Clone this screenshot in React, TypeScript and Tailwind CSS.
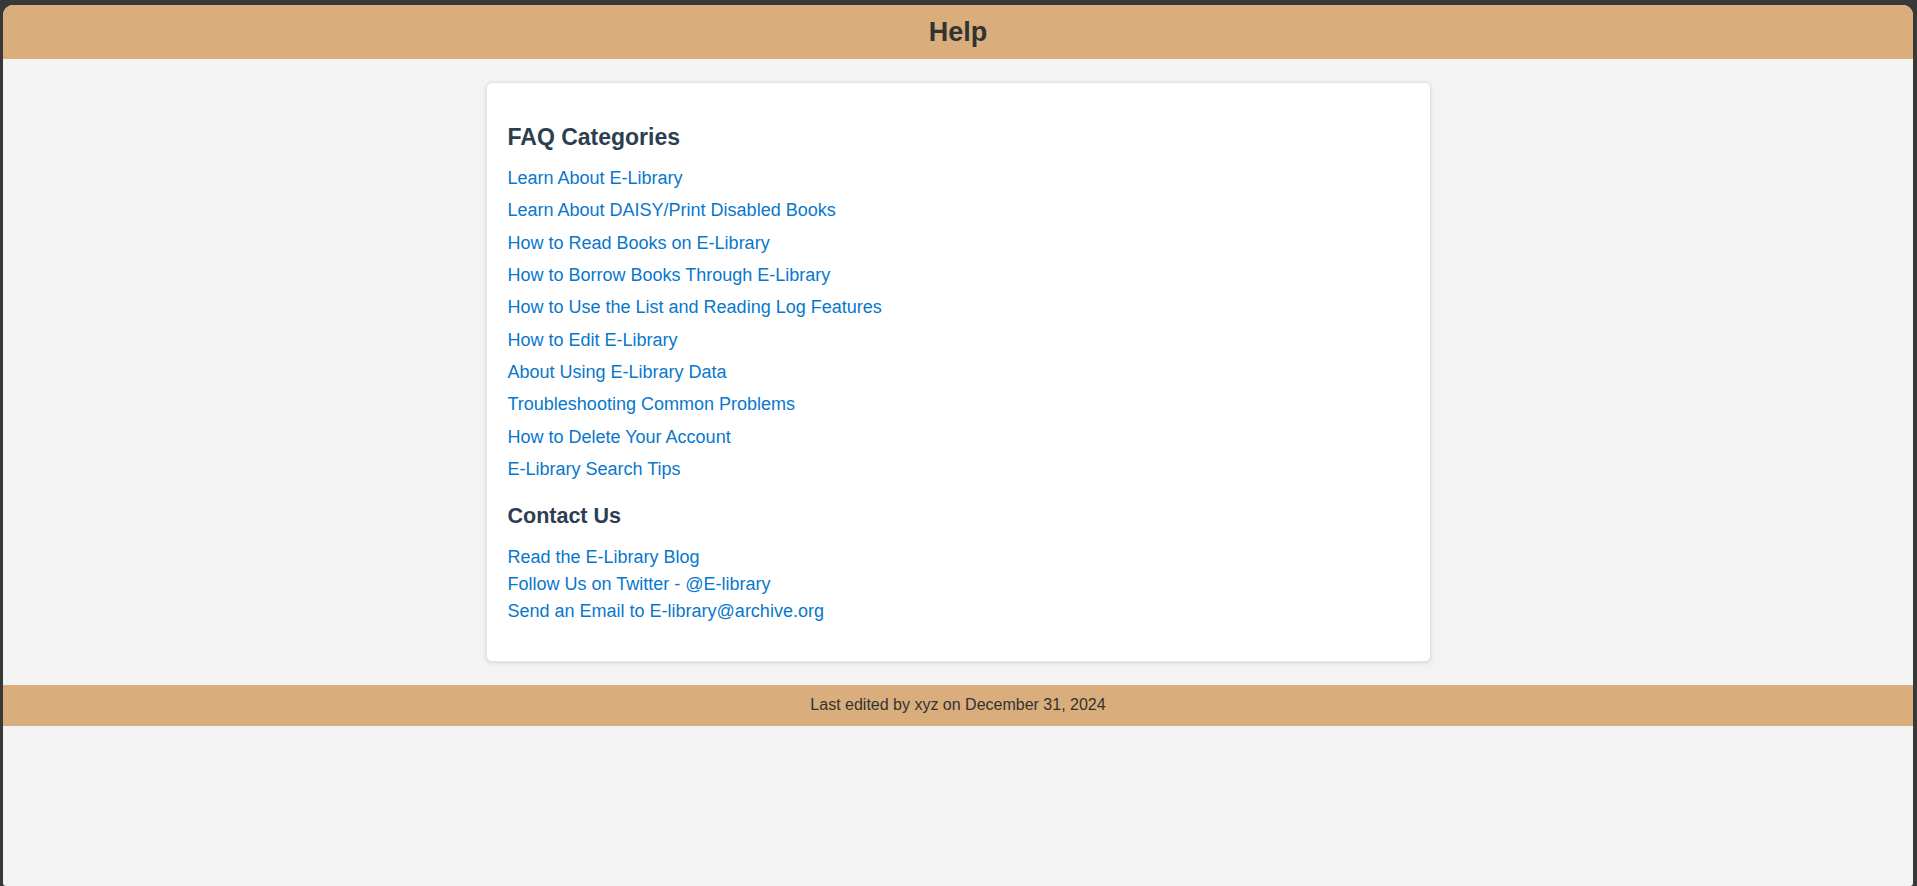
const faqLinks = [
  'Learn About E-Library',
  'Learn About DAISY/Print Disabled Books',
  'How to Read Books on E-Library',
  'How to Borrow Books Through E-Library',
  'How to Use the List and Reading Log Features',
  'How to Edit E-Library',
  'About Using E-Library Data',
  'Troubleshooting Common Problems',
  'How to Delete Your Account',
  'E-Library Search Tips',
]

const contactLinks = [
  'Read the E-Library Blog',
  'Follow Us on Twitter - @E-library',
  'Send an Email to E-library@archive.org',
]

export default function App() {
  return (
    <div className="h-[886px] bg-[#383838] pt-[5px] pl-[3px] pr-[4px] font-['Liberation_Sans',Arial,sans-serif]">
      <div className="flex h-full flex-col overflow-hidden rounded-t-[10px] rounded-b-[3px] bg-[#f3f3f3]">
        {/* top bar */}
        <header className="flex h-[54px] shrink-0 items-center justify-center bg-[#d9ad7c]">
          <h1 className="text-[27px] font-bold leading-none text-[#333333]">Help</h1>
        </header>

        <main className="flex justify-center pt-[23px]">
          <div className="w-[945px] rounded-[6px] border border-[#e3e3e3] bg-white pl-[21px] pr-5 pt-[40px] pb-[36px] shadow-[0_1px_4px_rgba(0,0,0,0.12)]">
            <h2 className="text-[23px] font-bold leading-[28px] text-[#2c3e50]">FAQ Categories</h2>
            <ul className="mt-[14px] flex flex-col gap-[5.33px]">
              {faqLinks.map((l) => (
                <li key={l}>
                  <a href="#" className="text-[18px] leading-[27px] text-[#0877cc]">
                    {l}
                  </a>
                </li>
              ))}
            </ul>

            <h2 className="mt-[20px] text-[21.5px] font-bold leading-[26px] text-[#2c3e50]">Contact Us</h2>
            <ul className="mt-[15px] flex flex-col">
              {contactLinks.map((l) => (
                <li key={l} className="leading-[27px]">
                  <a href="#" className="text-[18px] leading-[27px] text-[#0877cc]">
                    {l}
                  </a>
                </li>
              ))}
            </ul>
          </div>
        </main>

        {/* footer bar */}
        <footer className="mt-[23px] flex h-[41px] shrink-0 items-center justify-center bg-[#d9ad7c] text-[16px] text-[#333333]">
          Last edited by xyz on December 31, 2024
        </footer>
      </div>
    </div>
  )
}
